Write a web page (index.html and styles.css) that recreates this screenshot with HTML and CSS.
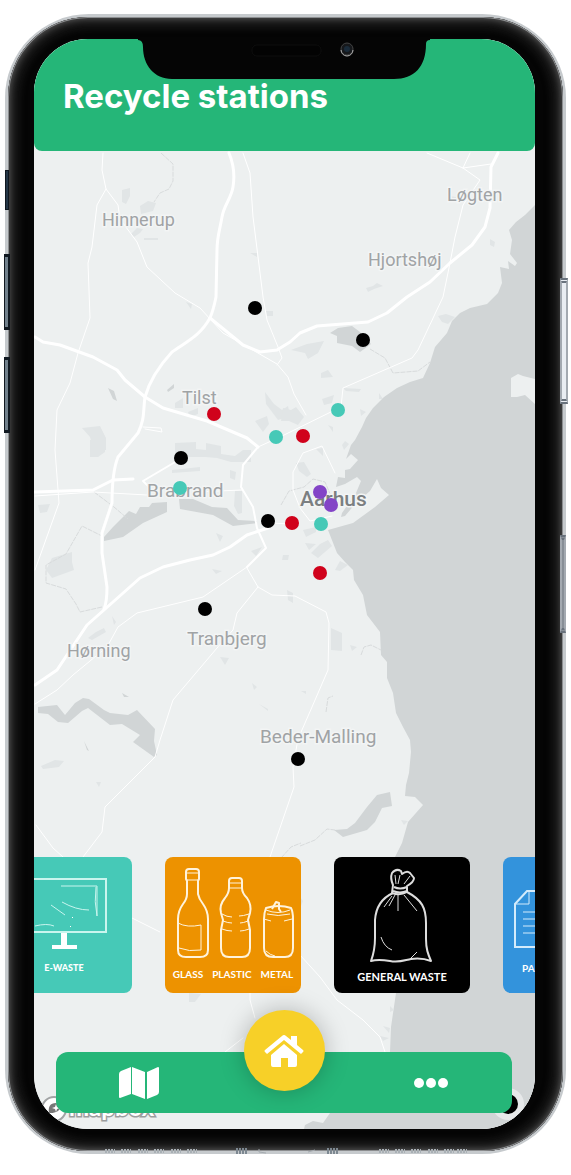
FILE: index.html
```html
<!DOCTYPE html>
<html lang="en">
<head>
<meta charset="utf-8">
<meta name="viewport" content="width=device-width, initial-scale=1">
<title>Recycle stations</title>
<link rel="stylesheet" href="styles.css">
</head>
<body>
<div class="phone">
  <span class="key key-mute"></span>
  <span class="key key-up"></span>
  <span class="key key-down"></span>
  <span class="key key-power"></span>
  <span class="key key-side"></span>
  <div class="bezel">
    <div class="screen">
      <svg class="map" viewBox="34 39 501 1090" preserveAspectRatio="xMidYMid slice" role="img" aria-label="Map of recycle stations around Aarhus">
        <rect class="land" x="0" y="0" width="600" height="1200"/>
        <g class="park">
          <path d="M122 190l8-2 0 8-4 8-4-2zM140 206l8-5 8 2-3 8-12 3zM131 234l6-6 6 1-3 4-6 4zM144 238l14 0 0 2-14 0zM250 253l7 0 0 4zM266 311l7 0 0 5-6 0zM186 302l6 2-1 5zM82 428l18-2 6 12 0 12-12 1-4-14zM175 403l8-5 0 10-8 0zM188 412l10-4 0 6-8 3zM255 421l12-5 2 8-6 8zM265 392l9 12 8 6 6-4 2 10-12 4-12-16z"/>
          <path d="M175 443l21-1 0 7 10 1 0-7 15 3 0 8 14 2 8-6 8 0 0 12-20 0-14-4-12-1-30 0zM90 440l15 0 0 12-7 5-8 0zM230 470l6 2-1 8-5-2zM172 470l28-3 0 4-28 2zM235 491l7 0 0 22-4 1-4-8zM38 505l12-1-3 8-7 1zM52 558l20-6 0 10 2 8-22 8-6-8zM216 533l7 3-3 6zM251 551l11-4-6 9zM283 555l6 0-1 5-6 0zM212 569l10 2-6 3zM88 638l8-6 8-4 2 4-14 8zM112 616l4 6-2 3zM252 683l5 4-3 3zM259 704l9 5 0 2zM220 657l9 1-4 7zM41 766l14-6 9 1-5 6-16 2zM96 782l5 0-2 5z"/>
          <path d="M291 350l16-6 17-3-6 12-10 6-3-6zM321 373l7-3 5 7-12 1zM343 388l18 1-2 3-13-1zM322 399l12-4-2 8-8 2zM379 393l4 6-4 0zM360 409l6 3-5 4zM283 408l8 2 5-3 8 10-6 8-9-4-8 0zM328 425l5 2 0 5zM345 441l4 3-5 6-2-5zM366 288l7-2 4-3 6 3-9 3-6 3zM449 196l7 1 0 3zM490 239l5 3-1 5-4-2zM438 316l8-2 9 3-7 7-6-2zM296 463l8-1 7 12-4 3-8-6zM316 449l7-1 0 8zM303 530l13-3 0 5-10 5zM305 543l11 1-7 6zM311 553l9-9 8-4 4 6-14 12zM335 570l5-9 8 4-8 6zM331 628l11 5 0 18-11-1zM350 645l7 2-5 4zM287 590l6 3 0 10-5-3zM301 691l5 0 0 3zM300 897l3 4-2 5zM189 993l12 1-6 8-6 0z"/>
        </g>
        <g class="sea">
          <path d="M535 205L525 215L516 222L509 230L512 240L510 254L517 263L515 266L508 261L509 269L500 267L502 283L498 293L487 304L470 308L460 313L452 321L447 333L435 347L430 363L423 378L410 382L397 388L384 397L373 408L366 418L362 427L355 440L351 445L346 459L351 454L358 460L350 469L345 470L345 478L338 477L336 487L345 484L357 477L361 481L356 493L342 513L341 517L345 516L356 503L370 491L377 479L381 488L389 495L375 507L353 523L328 530L337 553L345 562L353 570L354 580L363 595L367 615L380 632L381 655L387 662L387 678L393 693L396 713L403 727L410 740L411 752L409 773L406 785L405 796L415 797L423 805L408 822L402 843L395 857L390 900L396 993L391 1027L390 1052L335 1105L330 1113L323 1123L313 1121L305 1125L304 1129L535 1129z"/>
          <path d="M390 792l-13 3-10 12-12 16-8 6-13 1 9 7 24-7 8-8 7-14 10-2zM104 537l9-10 16-16 7 3 4-7 9 0 3-4 15-1 0 10-24 11-20 14-19 4zM179 499l14 0 19 8 15 1 11 12 19 1 0 2-24 3-20-11-33-6z"/>
          <path d="M38 707l19-2 8 10 10-12 8-5 6 1 15 11 6 3 18 2 9-5 18 19-1 12 3 14-3 2-21-15 7-7-18-11-12 1-22-17-6 3-14 12-10-1-10-8-10-1zM330 333l8-5 14-2 8 6 11 12-11 8-8-6-15-3 0-7zM108 388l6 3 3 10-4-2zM167 390l7-6 0 4-6 4zM122 693l7 4-5 0zM84 741l5 10-2-1z"/>
        </g>
        <path class="park" d="M401 820l7 1-4 4zM390 1006l4 4-4 2zM383 1026l7 2-1 5zM380 1036l9 2-6 3z"/>
        <path class="land" d="M535 379l-12-3-5-2-7 4 0 19 6 0 8-2 10 9z"/>
        <g class="trail">
          <path d="M161 153l12 11 0 17-4 8-9 4-6 9M370 349l15 9 8 15 25-2 12-9M94 492l20 15 14 12M102 607l-22 5-4-8-10-15-20-6 0-18 20-11 16-28 20 10M281 505l8-14 15-4 9-8 12 3 6 14M300 846l15-6 12-11 8 1M281 858l10-11 10-4M361 655l3-8 7-2 10 5M326 712l2-14 5-2"/>
        </g>
        <g class="road thin">
          <path d="M243 153l7 20 3 44 10 80 4 23 11 27 4 11-5 7M103 153l-1 17 4 19 12 16 2 14 17 23 10 25 28 26 25 15 23 25 54 31 11 13 6 17 12 21M106 189l-9 16-5 42-4 16 2 55-12 35-8 30-13 27-2 40 4 53-24 67"/>
          <path d="M247 568l11 19 14 8 23 1 31 16 3 11-1 47-16 37-14 32-5 28 1 20-24 70M258 587l-21 26-4 17-16 18-44 52-13 40-5 17-50 50-3 25-19 25M36 825l17 23 10 9M35 496l58-4 54 3M195 492l47-2M463 168l17 12-17 25-8 32-5 26-7 34-25 53-6 8-69 30-2 19-61 30-22 10M427 153l36 15 28-4M470 153l-7 15M335 473l-13-27-19 7-10 19 0 18 7 18 10 13 22-5M268 523l25 1"/>
          <path d="M132 918l28 14M300 955l20 22 17 23 26 20 17 17 5 15M250 990l0 10 5 18M243 1038l-18 14M143 427l18 1 1 4-17-3"/>
        </g>
        <path class="road" d="M258 447l-15 18-2 22 12 20 4 21 9 20-19 19"/>
        <path class="road thin" d="M247 567l-44 30-66 16-19 14-11 20-34 28-16 15-22 14"/>
        <path class="road" d="M182 458l-39 23 7 7"/>
        <g class="road wide">
          <path d="M229 153c5 12 6 22 4 34s-9 18-11 30-5 20-5 33l-1 47c-2 10-3 14-6 21-10 18-24 24-38 34-12 13-22 27-27 45-2 14 0 22-7 36l-20 24c-4 10-6 23-6 46l-10 30v20l5 34c0 8 0 15-3 22"/>
          <path d="M35 337l8 5 17 3 33 12 24 13 8 10 20 17 18 11 44 13 40 17 11 9M210 318l33 27 17 7 17-2 13-8 10-9 17-7 51-4 19-9 20-16 23-15 20-19 22-18 13-18 5-19 1-41 7-14M35 685l22-15 30-45 26-23 27-24 23-11 27-7 23-5 17-8 17-12 21-7M35 492l58-2 20-10 20-1"/>
        </g>
        <g class="place">
          <text x="102" y="226">Hinnerup</text>
          <text x="447" y="201">Løgten</text>
          <text x="368" y="266">Hjortshøj</text>
          <text x="182" y="404">Tilst</text>
          <text class="town" x="147" y="497">Brabrand</text>
          <text class="city" x="300" y="506">Aarhus</text>
          <text class="town" x="187" y="645">Tranbjerg</text>
          <text x="67" y="657">Hørning</text>
          <text class="town" x="260" y="743">Beder-Malling</text>
        </g>
        <g>
          <circle cx="255" cy="308" r="7"/><circle cx="363" cy="340" r="7"/><circle cx="181" cy="458" r="7"/><circle cx="268" cy="521" r="7"/><circle cx="205" cy="609" r="7"/><circle cx="298" cy="759" r="7"/>
        </g>
        <g fill="#d0021b">
          <circle cx="214" cy="414" r="7"/><circle cx="303" cy="436" r="7"/><circle cx="292" cy="523" r="7"/><circle cx="320" cy="573" r="7"/>
        </g>
        <g fill="#46c9b7">
          <circle cx="338" cy="410" r="7"/><circle cx="276" cy="437" r="7"/><circle cx="180" cy="488" r="7"/><circle cx="321" cy="524" r="7"/>
        </g>
        <g fill="#8344c7">
          <circle cx="320" cy="492" r="7"/><circle cx="331" cy="505" r="7"/>
        </g>
        <circle cx="54" cy="1109" r="12" fill="#fff" stroke="#a2a4a5" stroke-width="2"/>
        <path d="M49 1113c-1-6 1-10 7-10 5 1 5 8 0 9-2 1-5 1-7 1z" fill="#777"/>
        <path d="M56 1104l1 3 3 1-3 1-1 3-1-3-3-1 3-1z" fill="#fff"/>
        <text class="mapbox" x="69" y="1116">mapbox</text>
        <circle cx="508" cy="1104" r="16" fill="#e7e9ea"/>
        <circle cx="508" cy="1104" r="10"/>
      </svg>

      <header class="header"><h1 class="title">Recycle stations</h1></header>

      <svg class="notch" viewBox="0 0 292 41" aria-hidden="true">
        <path d="M0 0H292V1Q288 1 288 5C288 28 276 40 256 40H34C16 40 5 26 5 8Q5 1 0 1z" fill="#050505"/>
        <rect x="114" y="6" width="69" height="11" rx="5" fill="#030303" stroke="#0f0f0f"/>
        <circle cx="209" cy="10" r="6" fill="#16181b" stroke="#444"/>
        <path d="M203 11a6 6 0 0 0 12 0" fill="none" stroke="#b5b5b5"/>
        <circle cx="209" cy="10" r="3" fill="#1a2b3a"/>
      </svg>

      <main class="cards">
        <button class="card ewaste" type="button">
          <svg class="art art-short" viewBox="0 0 136 104" aria-hidden="true">
            <g fill="none" stroke="#c9f5ee" stroke-width="2">
              <path d="M26 22H110V75H26z"/>
              <path d="M65 29h36v30q-3-14-1-29M66 45q14 8 27 8M55 48l14 10M39 69q12-3 19 0" stroke-width="1"/>
            </g>
            <path d="M65 76h6v12h10v4H56v-4h9z" fill="#fff"/>
            <path d="M76 60h1v1h-1zM74 69h1v1h-1z" fill="#fff"/>
          </svg>
          <span class="label">E-WASTE</span>
        </button>
        <button class="card bottles" type="button">
          <svg class="art art-mid" viewBox="0 0 136 110" aria-hidden="true">
            <g fill="none" stroke="#fff3dc" stroke-width="2" stroke-linejoin="round">
              <path d="M21 15q0-3 3-3h7q3 0 3 3v7l-1 2v13q1 5 5 10 5 7 5 15v31q0 7-8 7H21q-8 0-8-7V62q0-8 5-15 4-5 4-10V24l-1-2z"/>
              <path d="M22 16h12M22 23h11M13 66q9 5 23 2v25q-12 2-22-2" stroke-width="1"/>
              <path d="M64 24q0-3 3-3h7q3 0 3 3v7q0 5 5 10 5 7 3 15l-2 7 2 10v18q0 9-8 9H64q-8 0-8-9V73l2-10-2-7q-2-8 4-15 4-5 4-10z"/>
              <path d="M64 26h13M64 31h13M57 57q5 3 10 3M84 57q-6 2-10 2M58 64q5 2 9 2M83 64q-5 2-8 2M57 72q5 2 10 2M84 72q-5 2-9 2" stroke-width="1"/>
              <path d="M101 51q-2 5-2 11v29q0 9 9 9h12q8 0 8-9V62q0-7-2-11-12-4-25 0z"/>
              <path d="M101 53q12 5 24 0M102 57q11 3 23 0M99 62l7 2M127 62l-8 2M101 94q4 4 9 5" stroke-width="1"/>
              <path d="M107 52l4-7 3 1v6l2 3"/>
            </g>
          </svg>
          <span class="label row"><span>GLASS</span><span>PLASTIC</span><span>METAL</span></span>
        </button>
        <button class="card general" type="button">
          <svg class="art art-tall" viewBox="0 0 136 113" aria-hidden="true">
            <g fill="none" stroke="#ddd" stroke-width="2" stroke-linejoin="round">
              <path d="M59 36C48 41 42 49 41 63v18c0 10-1 15-4 23 7-2 13-1 19 0 9 2 15-1 21-2 7-1 12-1 20 2-3-7-5-12-5-22V66C92 51 88 43 73 35"/>
              <path d="M59 28q-3-7-1-12 4-5 9-2l1 3q5-4 8-1l4 5q0 4-7 8l0 6q-7 4-15 1z"/>
              <path d="M60 30q6 3 13 0M59 34q7 3 14 0" />
              <path d="M66 18l-2 9M76 19l-6 8M61 18l1 9M64 38v16M58 39l-8 11M70 38l13 16M61 38l-6 11M47 80q3 10 11 13M76 102l7-7" stroke-width="1"/>
            </g>
          </svg>
          <span class="label">GENERAL WASTE</span>
        </button>
        <button class="card paper" type="button">
          <svg class="art art-short" viewBox="0 0 136 104" aria-hidden="true">
            <g fill="none" stroke="#d4ebfb" stroke-width="2">
              <path d="M60 34H24L12 47v43h48z"/>
              <path d="M26 35v12H13M20 55h38M20 62h38M20 69h38M20 76h38" stroke-width="1"/>
            </g>
          </svg>
          <span class="label">PAPER</span>
        </button>
      </main>

      <nav class="nav" aria-label="Main">
        <a class="tab" href="#map" aria-label="Map">
          <svg width="40" height="32" viewBox="0 0 40 32" fill="#fff"><path d="M0 7Q0 5 2 4L12 0V27L1 31Q0 31 0 30zM13 0L26 5V32L13 27zM28 5L39 0Q40 0 40 1V25Q40 27 38 28L28 32z"/></svg>
        </a>
        <a class="home" href="#home" aria-label="Home">
          <svg width="40" height="32" viewBox="0 0 40 32" fill="#fff"><path d="M20 9L33 20V30Q33 32 31 32H24V23H17V32H9Q7 32 7 30V20z"/><path d="M18 1Q20-1 22 1L27 5V1H33V10L39 15Q40 16 39 17L37 19L20 5L3 19L1 17Q0 16 1 15z"/></svg>
        </a>
        <a class="tab" href="#more" aria-label="More">
          <svg width="36" height="12" viewBox="0 0 36 12" fill="#fff"><circle cx="6" cy="6" r="5"/><circle cx="18" cy="6" r="5"/><circle cx="30" cy="6" r="5"/></svg>
        </a>
      </nav>
    </div>
  </div>
  <svg class="ports" viewBox="0 0 368 8" aria-hidden="true">
    <path d="M6 3h10M22 3h10M39 3h10M55 3h10M72 3h10M88 3h10M280 3h10M296 3h10M312 3h10M329 3h10M345 3h10M358 3h10" stroke="#a9b0b5" stroke-width="4" stroke-dasharray="2 1"/>
    <path d="M137 3h12M228 3h12" stroke="#7d8891" stroke-width="6" stroke-dasharray="2 1"/>
    <path d="M160 1v3l7 1M209 4l7-2" fill="none" stroke="#a5abb0"/>
  </svg>
</div>
</body>
</html>
```

FILE: styles.css
```css
* { box-sizing: border-box; }

body {
  margin: 0;
  min-height: 100vh;
  display: flex;
  padding: 14px 5px 21px;
  background: #fff;
  font-family: "Open Sans", "Noto Sans", sans-serif;
}

.phone {
  position: relative;
  flex: 1;
  min-width: 0;
  display: flex;
  padding: 3px;
  border-radius: 84px;
  background: #c6cacd;
}

.bezel {
  flex: 1;
  min-width: 0;
  display: flex;
  padding: 22px 28px 22px 26px;
  border-radius: 80px;
  background: #050505;
  box-shadow: inset 0 0 0 1px #8c8e90, inset 0 0 7px 2px #5c5c5c, inset 0 0 6px 12px #151515;
}

.screen {
  position: relative;
  flex: 1;
  min-width: 0;
  display: flex;
  flex-direction: column;
  overflow: hidden;
  border-radius: 54px;
  background: #edf0f0;
}

.key {
  position: absolute;
  width: 4px;
  background: #243646;
  border: 1px solid #101820;
}
.key-mute { left: 0; top: 156px; height: 40px; }
.key-up, .key-down {
  left: -1px;
  width: 6px;
  border-width: 3px 2px 3px 1px;
  background: #71808c;
}
.key-up { top: 240px; height: 76px; }
.key-down { top: 343px; height: 76px; }
.key-power, .key-side {
  right: -2px;
  width: 8px;
  border: 2px solid #a3a9b0;
  border-top: 5px double #69727c;
  border-bottom: 5px double #69727c;
  background: #e9edf2;
}
.key-power { top: 264px; height: 126px; }
.key-side { right: 0; width: 6px; top: 521px; height: 98px; background: #878e96; }

.map {
  position: absolute;
  inset: 0;
  width: 100%;
  height: 100%;
}
.land { fill: #edf0f0; }
.sea { fill: #d1d5d6; }
.park { fill: #e1e5e6; }
.trail { fill: none; stroke: #d8dbdc; stroke-dasharray: 5 1; }
.road {
  fill: none;
  stroke: #fff;
  stroke-width: 2;
  stroke-linejoin: round;
  stroke-linecap: round;
}
.thin { stroke-width: 1; }
.wide { stroke-width: 3; }

.place {
  fill: #a0a3a5;
  font-family: Roboto, sans-serif;
  font-size: 18px;
  paint-order: stroke;
  stroke: #f3f5f5;
  stroke-width: 3px;
}
.town { font-size: 19px; }
.city { fill: #7b7f81; font-size: 21px; font-weight: 500; }
.mapbox {
  fill: #fff;
  stroke: #9b9d9e;
  stroke-width: 3px;
  paint-order: stroke;
  font-family: Lato, sans-serif;
  font-size: 24px;
  font-weight: 700;
}

.header {
  position: relative;
  padding: 36px 29px 34px;
  border-radius: 0 0 8px 8px;
  background: #25b678;
}
.title {
  margin: 0;
  color: #fff;
  font-family: Inter, "Open Sans", sans-serif;
  font-size: 33px;
  font-weight: 700;
  line-height: 42px;
  white-space: nowrap;
}

.notch {
  position: absolute;
  top: 0;
  left: 50%;
  width: 292px;
  height: 41px;
  margin-left: -147px;
}

.cards {
  position: relative;
  display: flex;
  gap: 33px;
  margin-top: auto;
  margin-left: -38px;
}
.card {
  flex: none;
  display: flex;
  flex-direction: column;
  align-items: stretch;
  width: 136px;
  height: 136px;
  padding: 0;
  border: 0;
  border-radius: 8px;
  color: #fff;
  font-family: Lato, sans-serif;
  cursor: pointer;
}
.art { display: block; width: 136px; }
.art-short { height: 104px; }
.art-mid { height: 110px; }
.art-tall { height: 113px; }
.label {
  display: block;
  margin-bottom: auto;
  font-size: 11px;
  font-weight: 700;
  line-height: 14px;
  text-align: center;
}
.row { display: flex; justify-content: center; gap: 9px; font-size: 10px; }
.ewaste { background: #46c9b7; }
.ewaste .label { font-size: 9px; font-weight: 900; }
.bottles { background: #ed9200; }
.general { background: #000; }
.paper { background: #3393dc; }
.paper .label { padding-left: 19px; font-size: 10px; text-align: left; }

.nav {
  position: relative;
  display: grid;
  grid-template-columns: 1fr 81px 1fr;
  align-items: center;
  height: 61px;
  margin: 59px 23px 16px 22px;
  border-radius: 12px;
  background: #25b678;
}
.tab { display: flex; justify-content: center; }
.tab:first-child { padding-right: 22px; }
.tab:last-child { padding-left: 26px; }
.home {
  display: flex;
  align-items: center;
  justify-content: center;
  height: 81px;
  margin-top: -64px;
  border-radius: 50%;
  background: #f7d028;
  box-shadow: 0 0 24px rgba(0, 0, 0, 0.25);
}

.ports {
  position: absolute;
  left: 94px;
  bottom: -2px;
  width: 368px;
  height: 8px;
}
```
